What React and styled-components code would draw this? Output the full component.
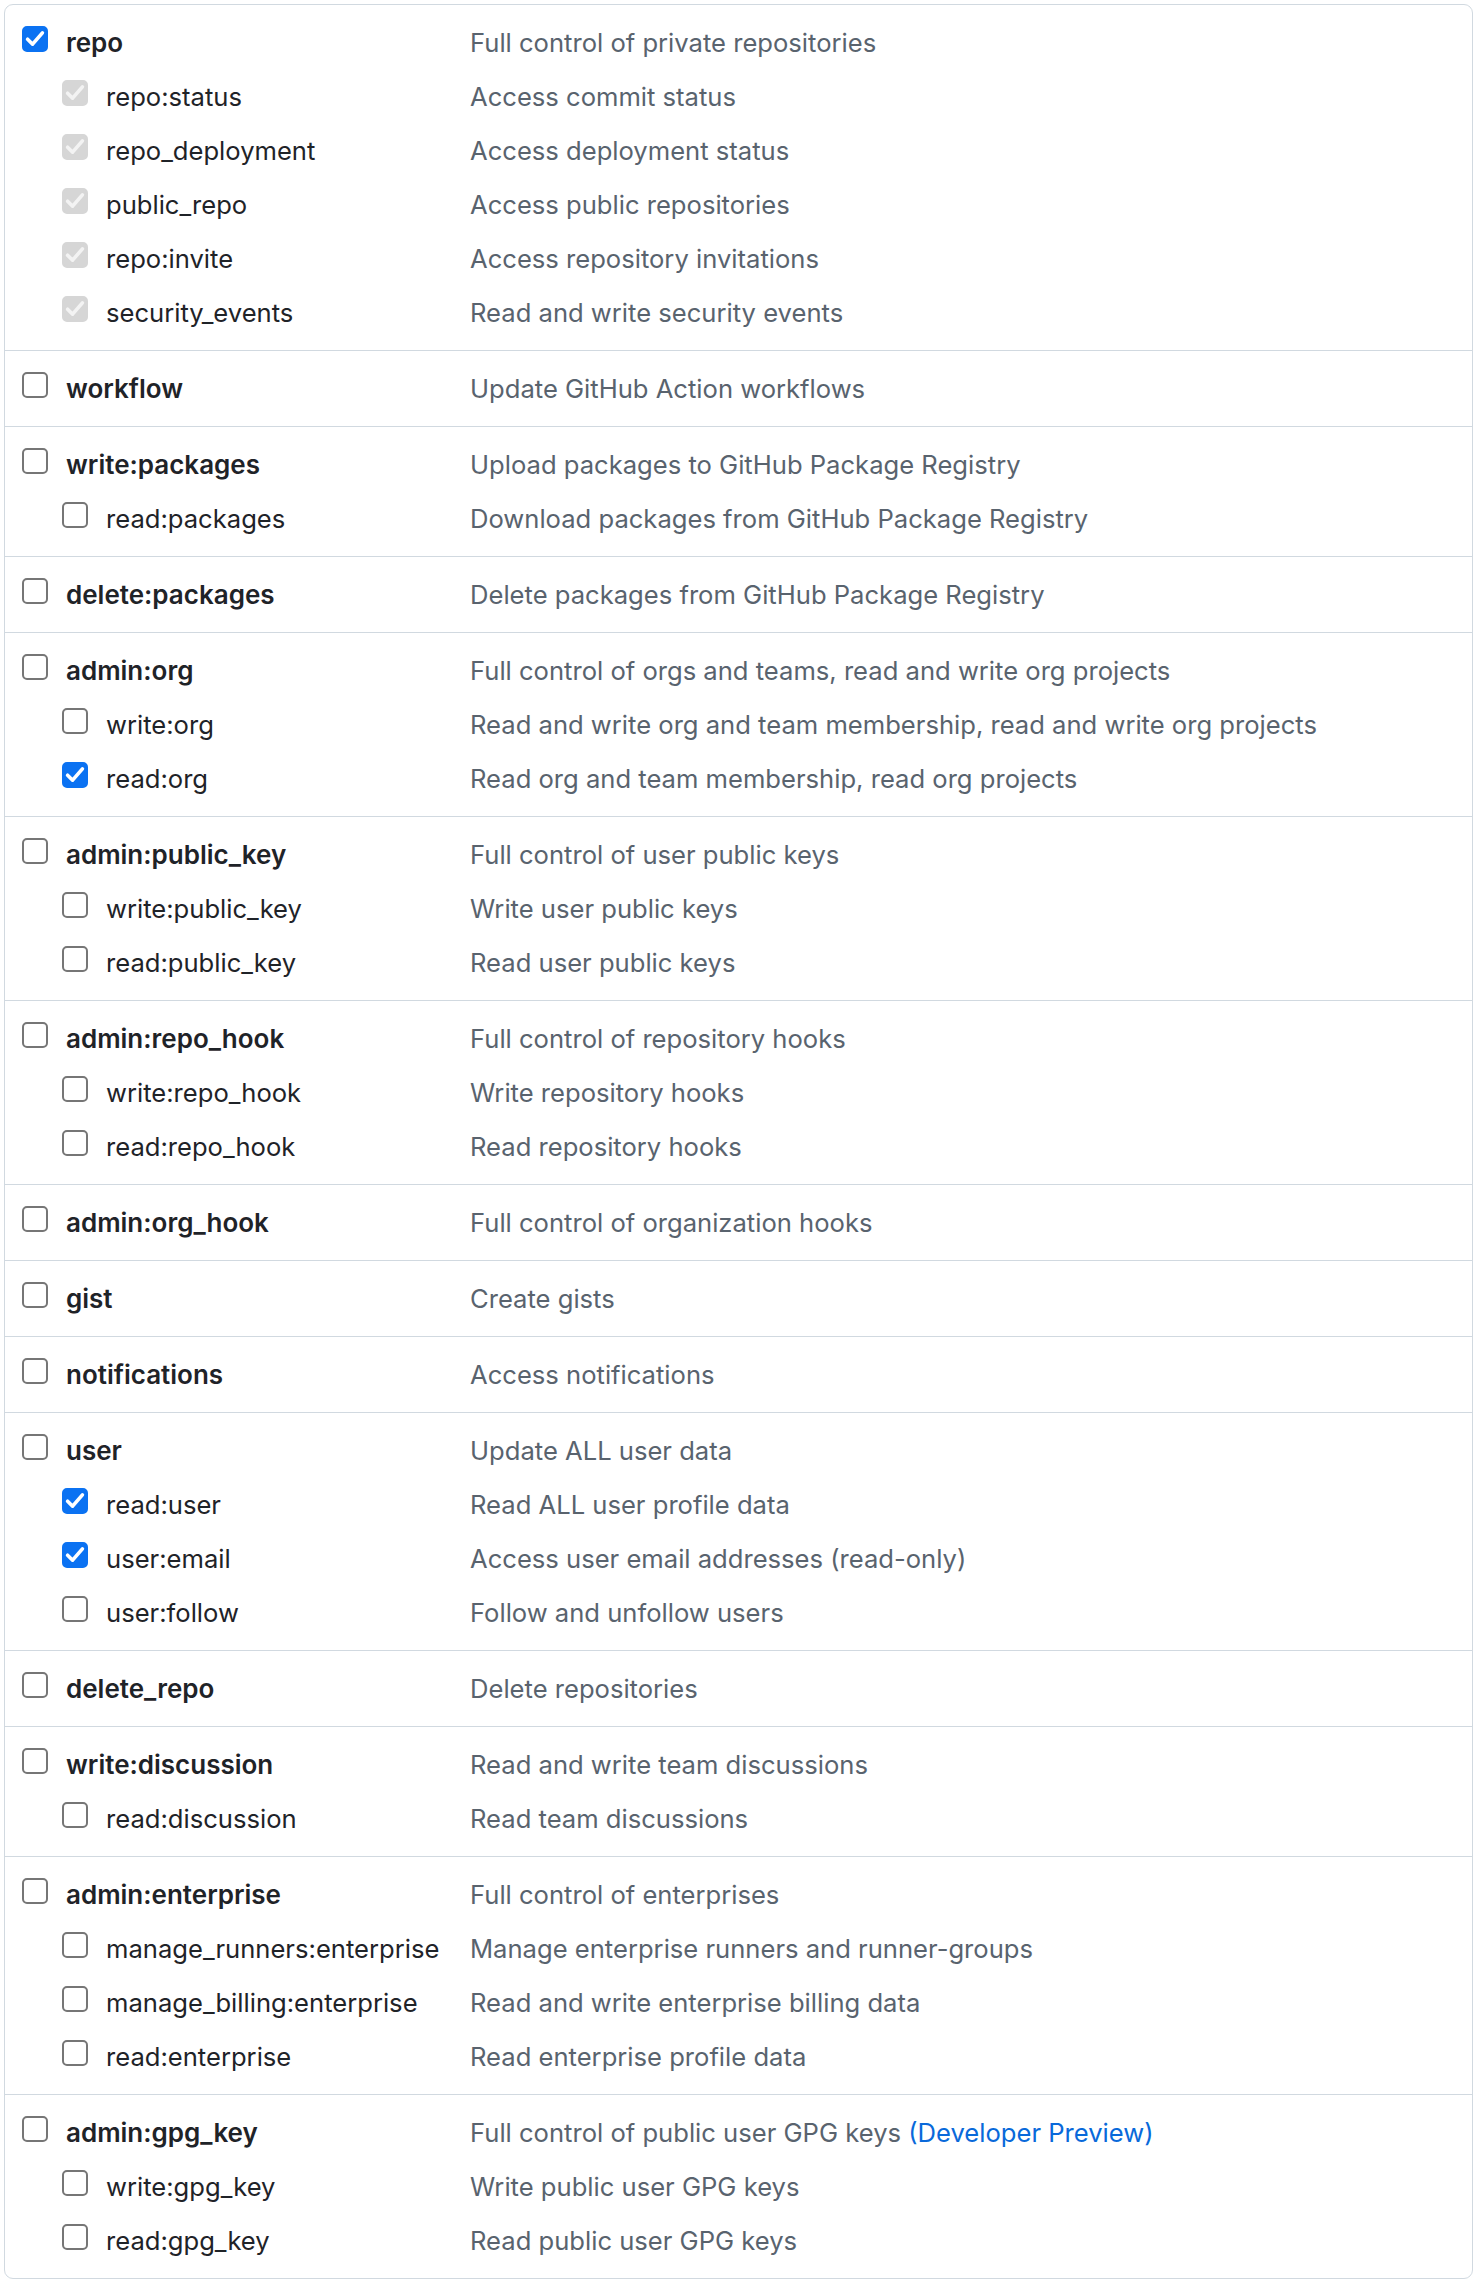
import React from "react";
import styled, { createGlobalStyle, css } from "styled-components";

const GlobalStyle = createGlobalStyle`
  html, body { margin: 0; padding: 0; background: #ffffff; }
  body {
    font-family: Inter, "Noto Sans", "Liberation Sans", sans-serif;
    color: #1f2328;
    -webkit-font-smoothing: antialiased;
  }
  * { box-sizing: border-box; }
`;

const Panel = styled.ul`
  list-style: none;
  margin: 4px 5px 4px 4px;
  padding: 0;
  border: 1px solid #d1d9e0;
  border-radius: 9px;
  overflow: hidden;
`;

const Group = styled.li`
  padding: 10px 0 11px;
  & + & { border-top: 1px solid #d1d9e0; }
`;

const Row = styled.div`
  display: grid;
  grid-template-columns: 465px 1fr;
  align-items: center;
  height: 54px;
`;

const NameCell = styled.div`
  display: flex;
  align-items: center;
  gap: 18px;
  padding-left: ${(p) => (p.$child ? 57 : 17)}px;
  white-space: nowrap;
`;

const Label = styled.span`
  font-size: ${(p) => (p.$child ? 25.6 : 26)}px;
  font-weight: ${(p) => (p.$child ? 400 : 600)};
  color: #1f2328;
`;

const Desc = styled.span`
  font-size: 25.6px;
  color: #59636e;
  white-space: nowrap;
`;

const Link = styled.a`
  color: #0969da;
  text-decoration: none;
`;

const boxStates = {
  checked: css`
    background: #0b72f2;
    border-color: #0b72f2;
  `,
  disabled: css`
    background: #d6d6d6;
    border-color: #d6d6d6;
  `,
  unchecked: css`
    background: #ffffff;
    border-color: #767676;
  `,
};

const Box = styled.span`
  flex: none;
  width: 26px;
  height: 26px;
  margin-top: -6px;
  border: 2px solid;
  border-radius: 5px;
  display: inline-flex;
  align-items: center;
  justify-content: center;
  ${(p) => boxStates[p.$state]}
  svg { display: block; }
`;

function Checkbox({ state }) {
  return (
    <Box $state={state} role="checkbox" aria-checked={state !== "unchecked"}>
      {state !== "unchecked" && (
        <svg width="22" height="22" viewBox="0 0 22 22">
          <path
            d="M3.6 11.2 L8.6 16.2 L18.4 4.8"
            fill="none"
            stroke={state === "disabled" ? "#f3f3f3" : "#ffffff"}
            strokeWidth="3.6"
            strokeLinecap="round"
            strokeLinejoin="round"
          />
        </svg>
      )}
    </Box>
  );
}

const U = "unchecked";
const C = "checked";
const D = "disabled";

const groups = [
  {
    name: "repo", desc: "Full control of private repositories", state: C,
    children: [
      ["repo:status", "Access commit status", D],
      ["repo_deployment", "Access deployment status", D],
      ["public_repo", "Access public repositories", D],
      ["repo:invite", "Access repository invitations", D],
      ["security_events", "Read and write security events", D],
    ],
  },
  { name: "workflow", desc: "Update GitHub Action workflows", state: U, children: [] },
  {
    name: "write:packages", desc: "Upload packages to GitHub Package Registry", state: U,
    children: [["read:packages", "Download packages from GitHub Package Registry", U]],
  },
  { name: "delete:packages", desc: "Delete packages from GitHub Package Registry", state: U, children: [] },
  {
    name: "admin:org", desc: "Full control of orgs and teams, read and write org projects", state: U,
    children: [
      ["write:org", "Read and write org and team membership, read and write org projects", U],
      ["read:org", "Read org and team membership, read org projects", C],
    ],
  },
  {
    name: "admin:public_key", desc: "Full control of user public keys", state: U,
    children: [
      ["write:public_key", "Write user public keys", U],
      ["read:public_key", "Read user public keys", U],
    ],
  },
  {
    name: "admin:repo_hook", desc: "Full control of repository hooks", state: U,
    children: [
      ["write:repo_hook", "Write repository hooks", U],
      ["read:repo_hook", "Read repository hooks", U],
    ],
  },
  { name: "admin:org_hook", desc: "Full control of organization hooks", state: U, children: [] },
  { name: "gist", desc: "Create gists", state: U, children: [] },
  { name: "notifications", desc: "Access notifications", state: U, children: [] },
  {
    name: "user", desc: "Update ALL user data", state: U,
    children: [
      ["read:user", "Read ALL user profile data", C],
      ["user:email", "Access user email addresses (read-only)", C],
      ["user:follow", "Follow and unfollow users", U],
    ],
  },
  { name: "delete_repo", desc: "Delete repositories", state: U, children: [] },
  {
    name: "write:discussion", desc: "Read and write team discussions", state: U,
    children: [["read:discussion", "Read team discussions", U]],
  },
  {
    name: "admin:enterprise", desc: "Full control of enterprises", state: U,
    children: [
      ["manage_runners:enterprise", "Manage enterprise runners and runner-groups", U],
      ["manage_billing:enterprise", "Read and write enterprise billing data", U],
      ["read:enterprise", "Read enterprise profile data", U],
    ],
  },
  {
    name: "admin:gpg_key",
    desc: (
      <>
        Full control of public user GPG keys <Link href="#">(Developer Preview)</Link>
      </>
    ),
    state: U,
    children: [
      ["write:gpg_key", "Write public user GPG keys", U],
      ["read:gpg_key", "Read public user GPG keys", U],
    ],
  },
];

function ScopeRow({ name, desc, state, child }) {
  return (
    <Row>
      <NameCell $child={child}>
        <Checkbox state={state} />
        <Label $child={child}>{name}</Label>
      </NameCell>
      <Desc>{desc}</Desc>
    </Row>
  );
}

export default function App() {
  return (
    <>
      <GlobalStyle />
      <Panel>
        {groups.map((g) => (
          <Group key={g.name}>
            <ScopeRow name={g.name} desc={g.desc} state={g.state} />
            {g.children.map(([n, d, s]) => (
              <ScopeRow key={n} name={n} desc={d} state={s} child />
            ))}
          </Group>
        ))}
      </Panel>
    </>
  );
}
